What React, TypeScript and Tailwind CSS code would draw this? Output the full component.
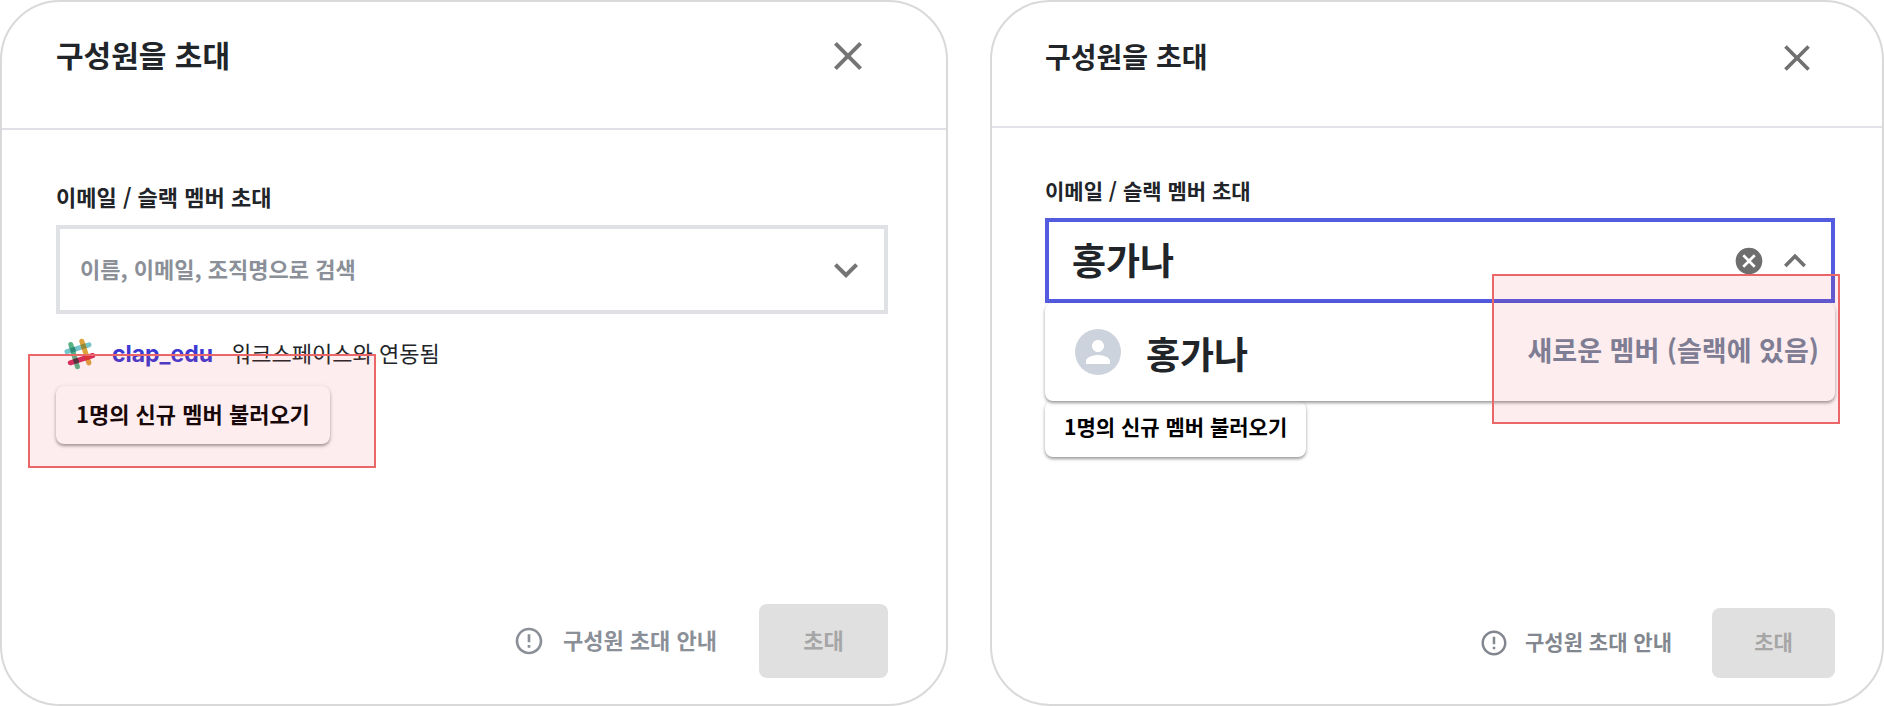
import { MdCancel, MdClose, MdErrorOutline, MdExpandLess, MdExpandMore, MdPerson } from "react-icons/md";

function SlackMark() {
  return (
    <svg className="size-8 shrink-0" viewBox="0 0 32 32" fill="none" strokeWidth="5" strokeLinecap="round" aria-hidden="true">
      <path d="M3 13.7 25 6.8" stroke="#74c4cb" />
      <path d="M6.8 6.5 13.4 28.6" stroke="#57b285" />
      <path d="M17.8 3.2 24.9 24.9" stroke="#dea23c" />
      <path d="M6.3 24.8 28.8 17.5" stroke="#d42a5c" />
      <g strokeLinecap="butt">
        <path d="M6.6 12.6 11.4 11" stroke="#2f8a78" />
        <path d="M17.2 9.2 21.9 7.7" stroke="#8f8a3b" />
        <path d="M9.7 23.7 14.4 22.2" stroke="#42303c" />
        <path d="M20.8 20.1 25.5 18.6" stroke="#d8342f" />
      </g>
    </svg>
  );
}

function Highlight({ className }: { className: string }) {
  return (
    <div
      aria-hidden="true"
      className={`pointer-events-none absolute border-2 border-[#ea6669] bg-[#eb4d57]/10 ${className}`}
    />
  );
}

const card = "flex min-w-0 flex-col rounded-[60px] border-2 border-[#d9d9d9] bg-white";
const raised = "bg-white shadow-[0_2px_3px_rgba(0,0,0,0.35),0_1px_6px_rgba(0,0,0,0.08)]";

function SearchDialog() {
  return (
    <section className={card} aria-labelledby="search-title">
      <header className="flex h-32 items-start justify-between border-b-2 border-[#e0e1e6] pt-[30px] pr-[74px] pl-[54px]">
        <h2 id="search-title" className="text-[30px] leading-[44px] font-bold">구성원을 초대</h2>
        <button type="button" aria-label="닫기" className="text-[#757575]">
          <MdClose className="size-12" />
        </button>
      </header>
      <div className="flex flex-1 flex-col pt-12 pr-[58px] pb-[26px] pl-[54px]">
        <label htmlFor="search-input" className="text-[22px] leading-9 font-bold">이메일 / 슬랙 멤버 초대</label>
        <div className="mt-[11px] flex h-[89px] items-center border-4 border-[#e0e1e5] pr-[14px] pl-5">
          <input
            id="search-input"
            type="text"
            placeholder="이름, 이메일, 조직명으로 검색"
            className="h-full min-w-0 flex-1 pb-1 text-[22px] font-bold outline-none placeholder:text-[#8a8f98] placeholder:opacity-100"
          />
          <button type="button" aria-label="목록 열기" className="text-[#757575]">
            <MdExpandMore className="size-12" />
          </button>
        </div>
        <p className="mt-6 flex h-8 items-center pl-2 text-[22px]">
          <SlackMark />
          <a href="#workspace" className="ml-4 font-[Inter,sans-serif] text-[23px] font-bold text-[#3c38d2]">clap_edu</a>
          <span className="ml-[18px] pb-1">워크스페이스와 연동됨</span>
        </p>
        <div className="relative mt-4 self-start">
          <button type="button" className={`h-[58px] rounded-lg px-5 pb-1 text-[22px] font-bold text-black ${raised}`}>
            1명의 신규 멤버 불러오기
          </button>
          <Highlight className="-top-8 -left-7 h-[114px] w-[348px]" />
        </div>
        <footer className="mt-auto flex items-center justify-end">
          <a href="#guide" className="flex items-center gap-[18px] text-[22px] font-bold text-[#8a8f98]">
            <MdErrorOutline className="size-8" />
            <span className="pb-1">구성원 초대 안내</span>
          </a>
          <button type="button" disabled className="ml-[42px] h-[74px] w-[129px] rounded-lg bg-[#e0e0e0] pb-1 text-[22px] font-bold text-[#a6a6a6]">
            초대
          </button>
        </footer>
      </div>
    </section>
  );
}

function ResultDialog() {
  return (
    <section className={card} aria-labelledby="result-title">
      <header className="flex h-[126px] items-start justify-between border-b-2 border-[#e2e3e8] pt-[34px] pr-[63px] pl-[53px]">
        <h2 id="result-title" className="text-[28px] leading-10 font-bold">구성원을 초대</h2>
        <button type="button" aria-label="닫기" className="text-[#707070]">
          <MdClose className="size-11" />
        </button>
      </header>
      <div className="flex flex-1 flex-col pt-11 pr-[47px] pb-[26px] pl-[53px]">
        <label htmlFor="result-input" className="text-[21px] leading-9 font-bold">이메일 / 슬랙 멤버 초대</label>
        <div className="mt-[10px] flex h-[85px] items-center border-4 border-[#535bdf] pr-[14px] pl-[23px]">
          <input
            id="result-input"
            type="text"
            defaultValue="홍가나"
            className="h-full min-w-0 flex-1 pb-1 text-[37px] font-bold outline-none"
          />
          <button type="button" aria-label="지우기" className="text-[#6e6e6e]">
            <MdCancel className="size-8" />
          </button>
          <button type="button" aria-label="목록 닫기" className="ml-2 text-[#707070]">
            <MdExpandLess className="size-11" />
          </button>
        </div>
        <div className="relative z-10">
          <button type="button" className={`flex h-[98px] w-full items-center rounded-lg pr-4 pl-[30px] font-bold ${raised}`}>
            <span className="flex size-[46px] items-center justify-center rounded-full bg-[#cdd3dc] text-white">
              <MdPerson className="size-9" />
            </span>
            <span className="ml-[25px] pt-1 text-[37px]">홍가나</span>
            <span className="ml-auto pb-1 text-[27px] text-[#72839b]">새로운 멤버 (슬랙에 있음)</span>
          </button>
          <Highlight className="-top-[29px] -right-[5px] h-[150px] w-[348px]" />
        </div>
        <button type="button" className={`h-14 self-start rounded-lg px-[19px] pb-1 text-[21px] font-bold text-black ${raised}`}>
          1명의 신규 멤버 불러오기
        </button>
        <footer className="mt-auto flex items-center justify-end">
          <a href="#guide" className="flex items-center gap-4 text-[21px] font-bold text-[#82878f]">
            <MdErrorOutline className="size-[30px]" />
            <span className="pb-0.5">구성원 초대 안내</span>
          </a>
          <button type="button" disabled className="ml-10 h-[70px] w-[123px] rounded-lg bg-[#e0e0e0] pb-0.5 text-[21px] font-bold text-[#a6a6a6]">
            초대
          </button>
        </footer>
      </div>
    </section>
  );
}

export default function App() {
  return (
    <main
      lang="ko"
      className="grid min-h-screen grid-cols-[minmax(0,948fr)_minmax(0,894fr)] gap-[42px] bg-white font-['Noto_Sans_CJK_KR',sans-serif] text-[#212428]"
    >
      <SearchDialog />
      <ResultDialog />
    </main>
  );
}
